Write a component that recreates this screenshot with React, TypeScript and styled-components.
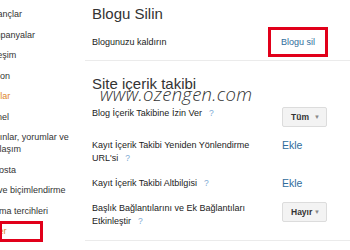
import React from "react";
import styled, { createGlobalStyle } from "styled-components";

const GlobalStyle = createGlobalStyle`
  html, body {
    margin: 0;
    padding: 0;
    background: #fff;
    overflow: hidden;
  }
  body {
    font-family: "Liberation Sans", Arial, sans-serif;
    color: #222;
  }
  * {
    box-sizing: border-box;
  }
`;

const Page = styled.div`
  display: flex;
  width: 350px;
  height: 250px;
  overflow: hidden;
`;

/* left settings navigation, cut off on the left edge */
const Sidebar = styled.nav`
  width: 85px;
  flex-shrink: 0;
  overflow: hidden;
  padding-top: 4px;
`;

const NavList = styled.ul`
  list-style: none;
  margin: 0 0 0 -15px;
  padding: 0;
`;

const NavItem = styled.li<{ $active?: boolean; $top?: boolean }>`
  position: relative;
  width: 90px;
  margin-left: ${({ $top }) => ($top ? "-3px" : "0")};
  padding: 4.25px 0;
  font-size: 9px;
  line-height: 12px;
  color: ${({ $active }) => ($active ? "#e0862a" : "#333")};
`;

const NavMark = styled.span`
  position: absolute;
  top: 0;
  bottom: 0;
  left: 14px;
  width: 44px;
  border: 3px solid #e1001a;
`;

const Main = styled.main`
  flex: 1;
  padding-top: 5px;
`;

const Section = styled.section<{ $spaced?: boolean }>`
  position: relative;
  padding-top: ${({ $spaced }) => ($spaced ? "14px" : "0")};
`;

const SectionTitle = styled.h2`
  margin: 0;
  padding-left: 7px;
  font-size: 15px;
  line-height: 18px;
  font-weight: normal;
  color: #333;
`;

const Rows = styled.div`
  display: flex;
  flex-direction: column;
  gap: 12px;
  margin-top: 13.5px;
  padding-bottom: 12px;
  border-bottom: 1px solid #ebebeb;
`;

const Row = styled.div<{ $center?: boolean }>`
  display: grid;
  grid-template-columns: 190px auto;
  align-items: ${({ $center }) => ($center ? "center" : "start")};
  padding-left: 7px;
`;

const DeleteRow = styled(Row)`
  padding-top: 4px;
  padding-bottom: 3px;
  border-bottom: 1px solid #ebebeb;
`;

const Label = styled.div`
  max-width: 170px;
  font-size: 9px;
  line-height: 13px;
  color: #222;
`;

const Help = styled.span`
  margin-left: 7px;
  font-size: 8.5px;
  color: #7ea9d3;
`;

const Link = styled.a<{ $large?: boolean }>`
  font-size: ${({ $large }) => ($large ? "10.5px" : "9px")};
  line-height: 13px;
  color: #2f6c9c;
  text-decoration: none;
  cursor: pointer;
`;

const MarkedAction = styled.div`
  display: flex;
  align-items: center;
  justify-content: center;
  width: 60px;
  height: 30px;
  margin-left: -14px;
  border: 3px solid #e1001a;
`;

const Select = styled.button`
  display: flex;
  align-items: center;
  justify-content: space-between;
  width: 45px;
  height: 20px;
  padding: 0 6px 0 8px;
  background: #f3f3f3;
  border: 1px solid #dcdcdc;
  border-radius: 2px;
  font-family: "Liberation Sans", Arial, sans-serif;
  font-size: 8.5px;
  font-weight: bold;
  color: #333;
`;

const Caret = styled.span`
  font-size: 6px;
  color: #888;
`;

/* site watermark stamped over the screenshot */
const Watermark = styled.div`
  position: absolute;
  left: 15px;
  top: 23px;
  font-family: "Open Sans", sans-serif;
  font-style: italic;
  font-weight: 300;
  font-size: 18.5px;
  line-height: 20px;
  letter-spacing: 0.3px;
  color: #333;
  pointer-events: none;
`;

const navItems = [
  { label: "Kazançlar", top: true },
  { label: "Kampanyalar", top: true },
  { label: "Yerleşim", top: true },
  { label: "Şablon", top: true },
  { label: "Ayarlar", top: true, active: true },
  { label: "Temel" },
  { label: "Yayınlar, yorumlar ve paylaşım" },
  { label: "E-posta" },
  { label: "Dil ve biçimlendirme" },
  { label: "Arama tercihleri" },
  { label: "Diğer", active: true, marked: true },
];

const Dropdown = ({ value }: { value: string }) => (
  <Select>
    <span>{value}</span>
    <Caret>▼</Caret>
  </Select>
);

export default function App() {
  return (
    <>
      <GlobalStyle />
      <Page>
        <Sidebar>
          <NavList>
            {navItems.map((item) => (
              <NavItem key={item.label} $active={item.active} $top={item.top}>
                {item.label}
                {item.marked && <NavMark />}
              </NavItem>
            ))}
          </NavList>
        </Sidebar>
        <Main>
          <Section>
            <SectionTitle>Blogu Silin</SectionTitle>
            <DeleteRow $center>
              <Label>Blogunuzu kaldırın</Label>
              <MarkedAction>
                <Link>Blogu sil</Link>
              </MarkedAction>
            </DeleteRow>
          </Section>
          <Section $spaced>
            <SectionTitle>Site içerik takibi</SectionTitle>
            <Watermark>www.ozengen.com</Watermark>
            <Rows>
              <Row>
                <Label>
                  Blog İçerik Takibine İzin Ver<Help>?</Help>
                </Label>
                <Dropdown value="Tüm" />
              </Row>
              <Row>
                <Label>
                  Kayıt İçerik Takibi Yeniden Yönlendirme URL'si<Help>?</Help>
                </Label>
                <Link $large>Ekle</Link>
              </Row>
              <Row>
                <Label>
                  Kayıt İçerik Takibi Altbilgisi<Help>?</Help>
                </Label>
                <Link $large>Ekle</Link>
              </Row>
              <Row>
                <Label>
                  Başlık Bağlantılarını ve Ek Bağlantıları Etkinleştir
                  <Help>?</Help>
                </Label>
                <Dropdown value="Hayır" />
              </Row>
            </Rows>
          </Section>
        </Main>
      </Page>
    </>
  );
}
